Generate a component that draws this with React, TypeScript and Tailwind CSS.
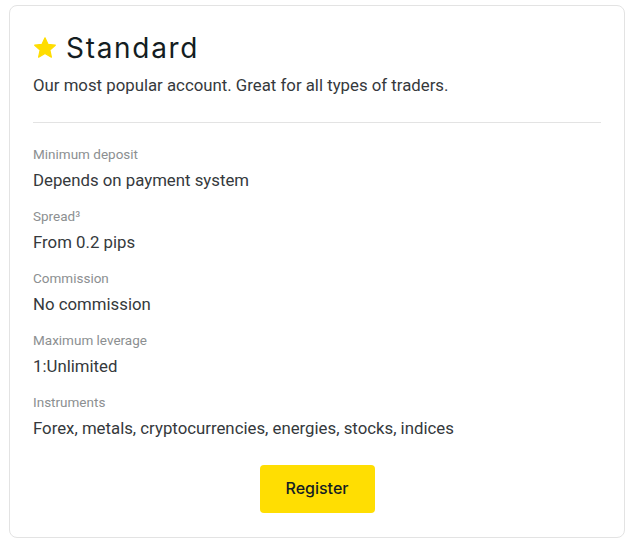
const rows = [
  { label: "Minimum deposit", value: "Depends on payment system" },
  { label: "Spread³", value: "From 0.2 pips" },
  { label: "Commission", value: "No commission" },
  { label: "Maximum leverage", value: "1:Unlimited" },
  { label: "Instruments", value: "Forex, metals, cryptocurrencies, energies, stocks, indices" },
];

export default function App() {
  return (
    <div className="min-h-[544px] bg-white px-[9px] pt-[5px] font-['Roboto',sans-serif]">
      <div className="rounded-[8px] border border-[#e3e3e3] bg-white px-[23px] pt-[24px] pb-[24px]">
        <div className="flex h-[36px] items-center gap-[9px]">
          <svg width="24" height="24" viewBox="0 0 24 24" aria-hidden="true">
            <path
              d="M12 1.8l3.1 6.6 7.2.8-5.4 4.9 1.5 7.1L12 17.6l-6.4 3.6 1.5-7.1L1.7 9.2l7.2-.8z"
              fill="#ffdd00"
              stroke="#ffdd00"
              strokeLinejoin="round"
              strokeWidth="1.2"
            />
          </svg>
          <h2 className="font-['Inter',sans-serif] text-[28px] leading-[36px] font-normal tracking-[1.7px] text-[#141d22]">
            Standard
          </h2>
        </div>
        <p className="mt-[7px] text-[16.8px] leading-[24px] text-[#35393c]">
          Our most popular account. Great for all types of traders.
        </p>
        <div className="mt-[25px] h-px bg-[#e3e3e3]" />
        <div className="mt-[21px] flex flex-col gap-[14px]">
          {rows.map((r) => (
            <div key={r.label} className="flex flex-col gap-[4px]">
              <span className="text-[13.5px] leading-[20px] text-[#8c8f91]">{r.label}</span>
              <span className="text-[16.8px] leading-[24px] text-[#35393c]">{r.value}</span>
            </div>
          ))}
        </div>
        <div className="mt-[25px] flex justify-center">
          <button className="h-[48px] w-[115px] rounded-[4px] bg-[#ffde02] pb-[2px] font-['Inter',sans-serif] text-[16px] font-medium text-[#141d22]">
            Register
          </button>
        </div>
      </div>
    </div>
  );
}
